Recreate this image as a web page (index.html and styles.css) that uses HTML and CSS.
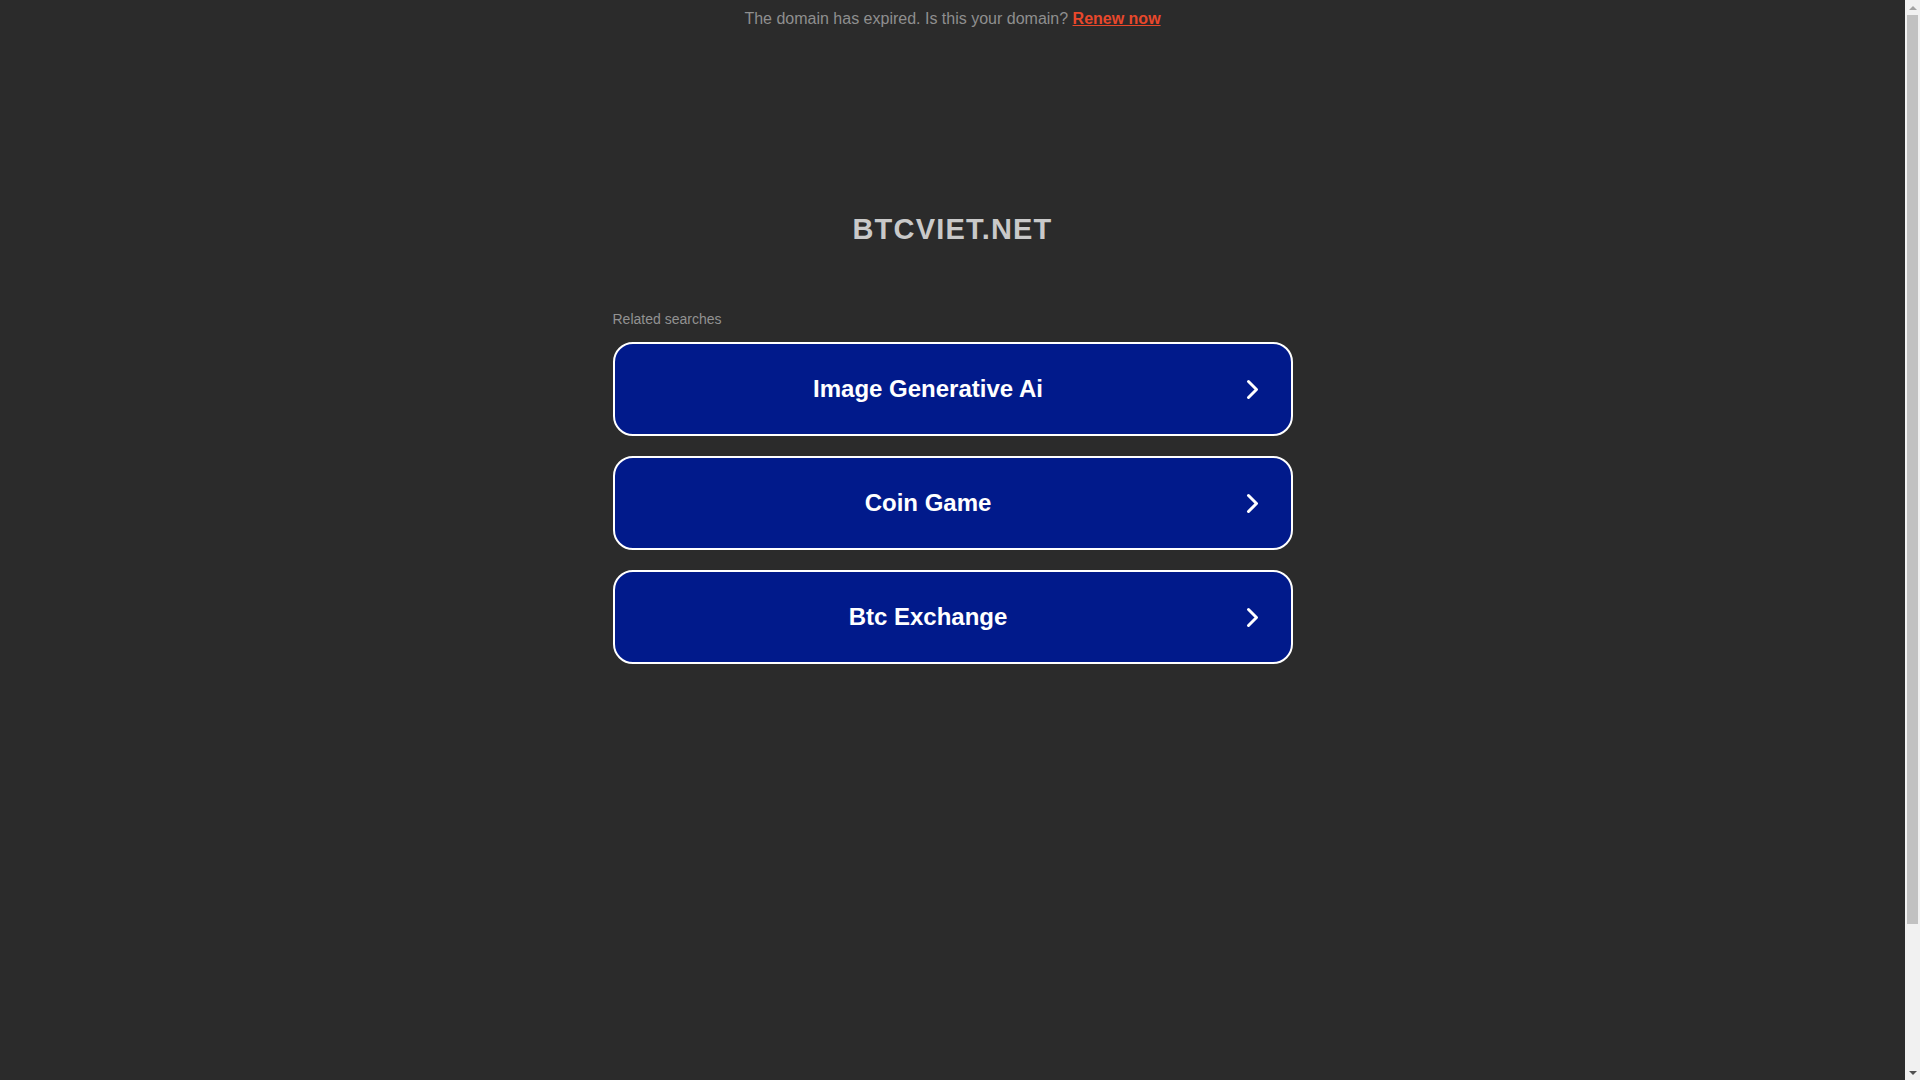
FILE: index.html
```html
<!DOCTYPE html>
<html lang="en">
<head>
<meta charset="utf-8">
<title>BTCVIET.NET</title>
<link rel="stylesheet" href="styles.css">
</head>
<body>
<div class="page">
  <div class="notice">The domain has expired. Is this your domain? <a class="renew" href="#">Renew now</a></div>
  <h1 class="domain">BTCVIET.NET</h1>
  <div class="related">
    <div class="related-title">Related searches</div>
    <a class="search" href="#"><span class="search-text">Image Generative Ai</span><svg class="chev" viewBox="0 0 24 24" width="24" height="24"><path d="M6.5 4.5 L14.5 12.5 L6.5 20.5" fill="none" stroke="#fff" stroke-width="3" stroke-linecap="round" stroke-linejoin="round"/></svg></a>
    <a class="search" href="#"><span class="search-text">Coin Game</span><svg class="chev" viewBox="0 0 24 24" width="24" height="24"><path d="M6.5 4.5 L14.5 12.5 L6.5 20.5" fill="none" stroke="#fff" stroke-width="3" stroke-linecap="round" stroke-linejoin="round"/></svg></a>
    <a class="search" href="#"><span class="search-text">Btc Exchange</span><svg class="chev" viewBox="0 0 24 24" width="24" height="24"><path d="M6.5 4.5 L14.5 12.5 L6.5 20.5" fill="none" stroke="#fff" stroke-width="3" stroke-linecap="round" stroke-linejoin="round"/></svg></a>
  </div>
</div>
<div class="scrollbar">
  <div class="sb-arrow sb-up"></div>
  <div class="sb-track"><div class="sb-thumb"></div></div>
  <div class="sb-arrow sb-down"></div>
</div>
</body>
</html>
```
FILE: styles.css
```css
html, body {
  margin: 0;
  padding: 0;
  background: #2b2b2b;
  height: 1080px;
  overflow: hidden;
}
body {
  font-family: "Liberation Sans", Arial, sans-serif;
  display: flex;
}
.page {
  flex: 1;
  height: 1080px;
  display: flex;
  flex-direction: column;
  align-items: center;
}
.notice {
  padding-top: 10px;
  font-size: 16px;
  line-height: 18px;
  color: #8f8f8f;
  text-align: center;
}
.renew {
  color: #e8482b;
  font-weight: bold;
  text-decoration: underline;
}
.domain {
  margin: 185px 0 0;
  font-size: 29px;
  line-height: 32px;
  font-weight: bold;
  letter-spacing: 1.2px;
  color: #c9c9c9;
  text-align: center;
}
.related {
  width: 680px;
  margin-top: 66px;
  display: flex;
  flex-direction: column;
  gap: 20px;
}
.related-title {
  font-size: 14px;
  line-height: 16px;
  color: #929292;
}
.search {
  box-sizing: border-box;
  height: 94px;
  display: flex;
  align-items: center;
  background: #011a8b;
  border: 2px solid #ffffff;
  border-radius: 20px;
  text-decoration: none;
}
.related-title + .search {
  margin-top: -5px;
}
.search-text {
  flex: 1;
  text-align: center;
  font-size: 24px;
  font-weight: bold;
  color: #ffffff;
}
.chev {
  flex: none;
  margin-right: 25px;
}
.scrollbar {
  flex: none;
  width: 15px;
  height: 1080px;
  background: #f1f1f1;
  display: flex;
  flex-direction: column;
}
.sb-arrow {
  height: 15px;
  display: flex;
  justify-content: center;
  align-items: center;
}
.sb-arrow::before {
  content: "";
  width: 0;
  height: 0;
  border-left: 4px solid transparent;
  border-right: 4px solid transparent;
}
.sb-up::before {
  border-bottom: 4px solid #a3a3a3;
}
.sb-down::before {
  border-top: 4px solid #505050;
}
.sb-track {
  flex: 1;
  padding: 0 2px;
}
.sb-thumb {
  height: 909px;
  background: #c1c1c1;
}
```
